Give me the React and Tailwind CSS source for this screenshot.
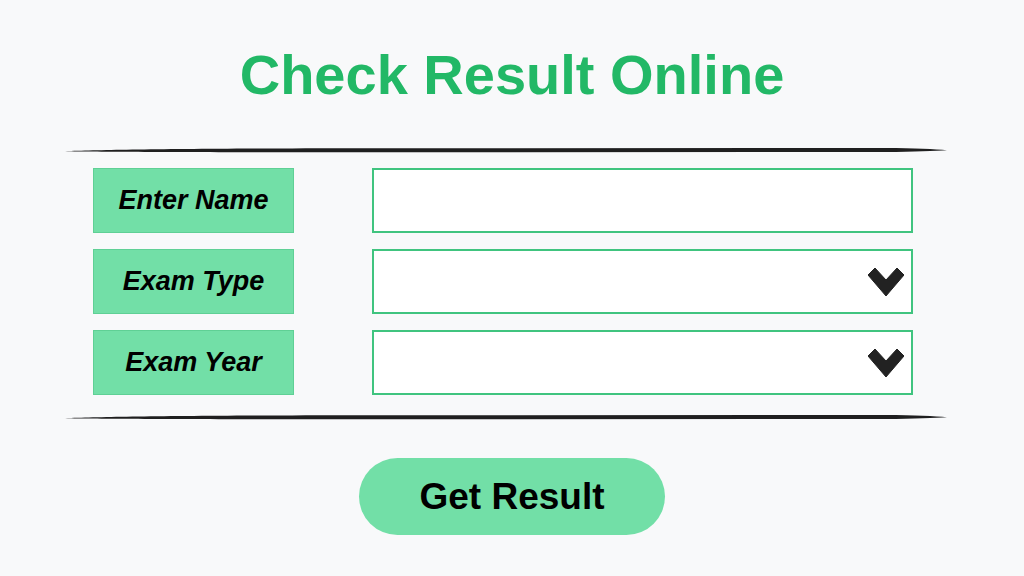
import React from 'react';

const fields = [
  { label: 'Enter Name', select: false },
  { label: 'Exam Type', select: true },
  { label: 'Exam Year', select: true },
];

// hand-drawn looking divider: thin at both ends, heavier in the middle
const BrushLine = () => (
  <svg className="block w-[882px] h-[8px]" viewBox="0 0 882 8" preserveAspectRatio="none">
    <path d="M0 5.2 C 40 3.6, 120 2.4, 300 2.2 L 820 2.0 C 850 2.2, 870 3.2, 882 4.2 C 870 4.8, 850 5.6, 820 6.0 L 300 6.2 C 120 6.2, 40 5.8, 0 5.2 Z" fill="#1f1f1f" />
  </svg>
);

const Chevron = () => (
  <svg width="36" height="30" viewBox="0 0 36 30" className="block">
    <path d="M0 8 L7 1 L18 13 L29 1 L36 8 L18 29 Z" fill="#222222" strokeLinejoin="round" stroke="#222222" strokeWidth="1" />
  </svg>
);

const App = () => {
  return (
    <div className="w-[1024px] h-[576px] bg-[#f8f9fa] flex flex-col overflow-hidden" style={{ fontFamily: '"Liberation Sans", Arial, sans-serif' }}>
      <h1 className="mt-[47px] text-center text-[56px] leading-none font-bold text-[#22b866]">
        Check Result Online
      </h1>

      <div className="ml-[65px] mt-[43px] w-[882px] flex flex-col">
        <BrushLine />
        <div className="pl-[28px] pr-[34px] mt-[14px] flex flex-col gap-[16px]">
          {fields.map((f) => (
            <div key={f.label} className="flex items-center gap-[78px]">
              <div className="w-[201px] h-[65px] bg-[#72dfa7] border border-[#5fd095] flex items-center justify-center">
                <span className="text-[27px] font-bold italic text-black">{f.label}</span>
              </div>
              <div className="flex-1 h-[65px] bg-white border-2 border-[#40c47f] flex items-center justify-end pr-[7px]">
                {f.select && <Chevron />}
              </div>
            </div>
          ))}
        </div>
        <div className="mt-[18px]">
          <BrushLine />
        </div>
      </div>

      <div className="mt-[37px] flex justify-center">
        <button className="w-[306px] h-[77px] rounded-full bg-[#72dfa7] text-[37px] font-bold text-black">
          Get Result
        </button>
      </div>
    </div>
  );
};

export default App;
